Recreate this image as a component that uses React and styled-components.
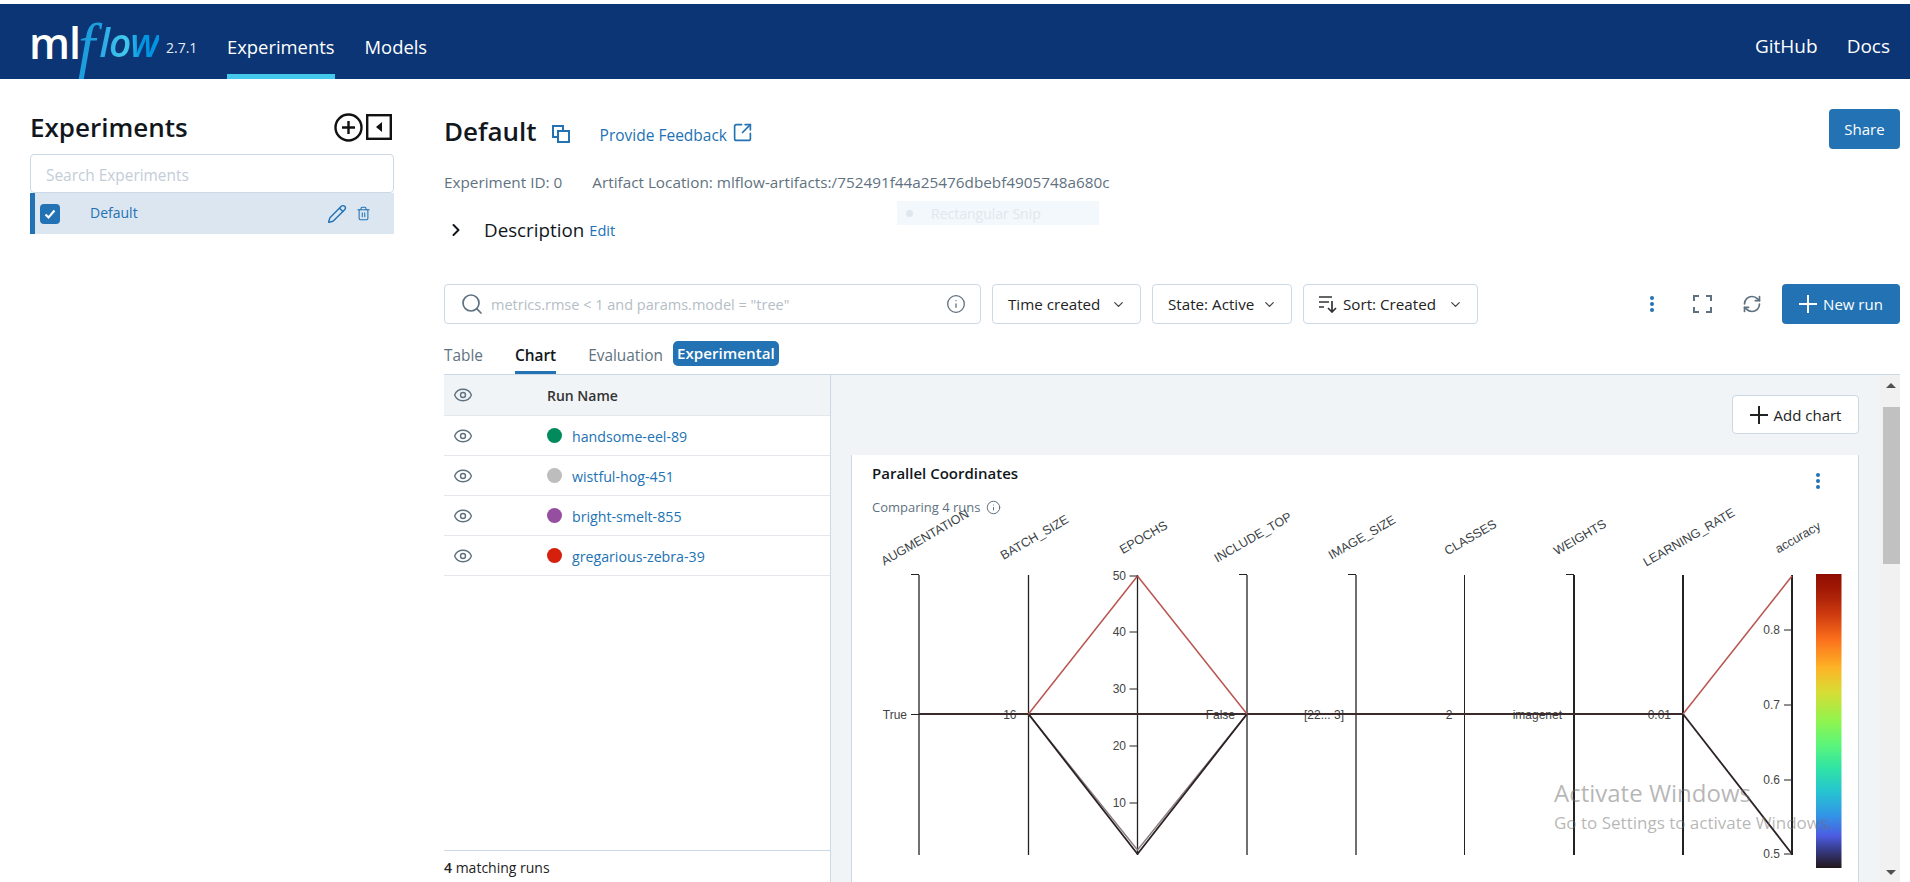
import React from 'react';
import styled, { createGlobalStyle } from 'styled-components';
import { ChevronDown, ChevronRight, Eye, Info, Pencil, RefreshCw, Search, SquareArrowOutUpRight, Trash2 } from 'lucide-react';

const BLUE = '#2272b4';
const GRAY = '#5f7281';
const INK = '#11171c';
const LINE = '#cbd8e5';

const GlobalStyle = createGlobalStyle`
  html, body { margin: 0; padding: 0; background: #fff; }
  body { font-family: "Open Sans", "Noto Sans", sans-serif; color: ${INK}; }
  * { box-sizing: border-box; }
`;

const runs = [
  { name: 'handsome-eel-89', color: '#018a5c' },
  { name: 'wistful-hog-451', color: '#bdbdbd' },
  { name: 'bright-smelt-855', color: '#954ea0' },
  { name: 'gregarious-zebra-39', color: '#d4200c' },
];

const axes = [
  { label: 'AUGMENTATION', x: 67, topTick: true, value: 'True' },
  { label: 'BATCH_SIZE', x: 176.5, value: '16' },
  { label: 'EPOCHS', x: 285.5 },
  { label: 'INCLUDE_TOP', x: 395, topTick: true, value: 'False' },
  { label: 'IMAGE_SIZE', x: 504, topTick: true, value: '[22... 3]', plain: true },
  { label: 'CLASSES', x: 612.5, value: '2', width: 1 },
  { label: 'WEIGHTS', x: 722, topTick: true, value: 'imagenet', width: 2, plain: true },
  { label: 'LEARNING_RATE', x: 831, value: '0.01', width: 2 },
  { label: 'accuracy', x: 940, width: 2 },
];

const epochTicks = [[50, 121], [40, 177], [30, 234], [20, 291], [10, 348]];
const accuracyTicks = [['0.8', 175], ['0.7', 250], ['0.6', 325], ['0.5', 399]];

const colorStops = [
  [0, '#8f0c00'], [0.08, '#ad2208'], [0.14, '#cf3c10'], [0.22, '#fb6e1c'], [0.32, '#fdb426'],
  [0.4, '#d8dc34'], [0.5, '#90f44e'], [0.58, '#5cf57a'], [0.66, '#30e4a4'], [0.74, '#26c4d0'],
  [0.82, '#3296e6'], [0.89, '#4c5ce2'], [0.94, '#363a84'], [1, '#23171b'],
];

const ParallelChart = () => (
  <Chart viewBox="0 0 1006 427" width="1006" height="427">
    <defs>
      <linearGradient id="turbo" x1="0" y1="0" x2="0" y2="1">
        {colorStops.map(([offset, color]) => <stop key={offset} offset={offset} stopColor={color} />)}
      </linearGradient>
    </defs>
    {axes.map((axis) => (
      <g key={axis.label}>
        <line x1={axis.x} x2={axis.x} y1="120" y2="400" stroke="#222" strokeWidth={axis.width || 1.3} />
        {axis.topTick && <path d={`M${axis.x - 8} 119.5 H${axis.x}`} stroke="#222" strokeWidth="1" />}
        <AxisLabel transform={`translate(${axis.x + 8} 86) rotate(-30)`} textAnchor="middle">{axis.label}</AxisLabel>
        {axis.value && (
          <>
            {!axis.plain && <path d={`M${axis.x - 8} 259.5 H${axis.x}`} stroke="#222" strokeWidth="1" />}
            <TickLabel x={axis.x - 12} y="263.5" textAnchor="end">{axis.value}</TickLabel>
          </>
        )}
      </g>
    ))}
    <g fill="none" strokeLinejoin="round">
      <path d="M67 259 L831 259" stroke="#3b2a2b" strokeWidth="2" />
      <path d="M176.5 259 L285.5 395 L395 259" stroke="#8b7f80" strokeWidth="1.4" />
      <path d="M176.5 259 L285.5 399 L395 259" stroke="#2c2224" strokeWidth="1.8" />
      <path d="M176.5 259 L285.5 121 L395 259" stroke="#b9564f" strokeWidth="1.5" />
      <path d="M831 259 L940 399" stroke="#2c2224" strokeWidth="1.8" />
      <path d="M831 259 L940 121" stroke="#b9564f" strokeWidth="1.5" />
    </g>
    {epochTicks.map(([value, y]) => (
      <g key={value}>
        <path d={`M277.5 ${y} H285.5`} stroke="#222" strokeWidth="1" />
        <TickLabel x="274" y={y + 4} textAnchor="end">{value}</TickLabel>
      </g>
    ))}
    {accuracyTicks.map(([value, y]) => (
      <g key={value}>
        <path d={`M932 ${y} H940`} stroke="#222" strokeWidth="1" />
        <TickLabel x="928" y={y + 4} textAnchor="end">{value}</TickLabel>
      </g>
    ))}
    <rect x="964" y="119" width="25.5" height="294" fill="url(#turbo)" />
  </Chart>
);

const CopyIcon = () => (
  <svg width="18" height="18" viewBox="0 0 18 18" fill="none" stroke={BLUE} strokeWidth="2">
    <path d="M11 5V1H1v11h4" />
    <rect x="6" y="6" width="11" height="11" />
  </svg>
);

const MoreIcon = () => (
  <svg width="6" height="18" viewBox="0 0 6 18" fill={BLUE}>
    <circle cx="3" cy="3" r="2" />
    <circle cx="3" cy="9" r="2" />
    <circle cx="3" cy="15" r="2" />
  </svg>
);

const SortIcon = () => (
  <svg width="18" height="18" viewBox="0 0 18 18" fill="none" stroke="#333" strokeWidth="1.7">
    <path d="M0 2h13M0 7h10M0 12h5M13 6v11M9 13l4 4 4-4" />
  </svg>
);

const FullscreenIcon = () => (
  <svg width="19" height="18" viewBox="0 0 19 18" fill="none" stroke={GRAY} strokeWidth="2">
    <path d="M6 1H1v5M13 1h5v5M6 17H1v-5M13 17h5v-5" />
  </svg>
);

const PlusIcon = ({ color }) => (
  <svg width="18" height="18" viewBox="0 0 18 18" fill="none" stroke={color} strokeWidth="2">
    <path d="M9 0v18M0 9h18" />
  </svg>
);

const AddExperimentIcon = () => (
  <svg width="29" height="29" viewBox="0 0 29 29" fill="none" stroke="#111" strokeWidth="2.4">
    <circle cx="14.5" cy="14.5" r="13" />
    <path d="M14.5 8v13M8 14.5h13" />
  </svg>
);

const CollapseIcon = () => (
  <svg width="26" height="26" viewBox="0 0 26 26">
    <rect x="1.2" y="1.2" width="23.6" height="23.6" fill="none" stroke="#111" strokeWidth="2.4" />
    <path d="M16 8v10l-6-5z" fill="#111" />
  </svg>
);

const CheckIcon = () => (
  <svg width="14" height="14" viewBox="0 0 14 14" fill="none" stroke="#fff" strokeWidth="2.2">
    <path d="M2.5 7.5l3 3 6-7" />
  </svg>
);

const App = () => (
  <Page>
    <GlobalStyle />
    <TopBar>
      <Logo>
        <LogoMl>ml</LogoMl>
        <LogoF>f</LogoF>
        <LogoFlow>low</LogoFlow>
      </Logo>
      <Version>2.7.1</Version>
      <NavLinks>
        <NavLink $active>Experiments</NavLink>
        <NavLink>Models</NavLink>
      </NavLinks>
      <NavRight>
        <NavLink>GitHub</NavLink>
        <NavLink>Docs</NavLink>
      </NavRight>
    </TopBar>

    <Content>
      <Sidebar>
        <SidebarHead>
          <SidebarTitle>Experiments</SidebarTitle>
          <SidebarActions>
            <AddExperimentIcon />
            <CollapseIcon />
          </SidebarActions>
        </SidebarHead>
        <SearchBox>Search Experiments</SearchBox>
        <ExperimentRow>
          <Checkbox><CheckIcon /></Checkbox>
          <ExperimentName>Default</ExperimentName>
          <Pencil size={20} color={BLUE} strokeWidth={1.7} />
          <Trash2 size={15} color={BLUE} strokeWidth={1.7} />
        </ExperimentRow>
      </Sidebar>

      <Main>
        <HeaderRow>
          <PageTitle>Default</PageTitle>
          <CopyHolder><CopyIcon /></CopyHolder>
          <Feedback>
            Provide Feedback
            <SquareArrowOutUpRight size={21} color={BLUE} strokeWidth={1.9} />
          </Feedback>
          <PrimaryButton $width={71}>Share</PrimaryButton>
        </HeaderRow>
        <MetaRow>
          <span>Experiment ID: 0</span>
          <span>Artifact Location: mlflow-artifacts:/752491f44a25476dbebf4905748a680c</span>
        </MetaRow>
        <DescriptionRow>
          <ChevronRight size={20} color={INK} strokeWidth={2.4} />
          <DescriptionTitle>Description</DescriptionTitle>
          <EditLink>Edit</EditLink>
        </DescriptionRow>
        <FilterRow>
          <FilterInput>
            <Search size={24} color={GRAY} strokeWidth={1.7} />
            <Placeholder>metrics.rmse &lt; 1 and params.model = "tree"</Placeholder>
            <Info size={20} color={GRAY} strokeWidth={1.6} />
          </FilterInput>
          <Select $width={149}>Time created<ChevronDown size={15} color="#444" strokeWidth={2} /></Select>
          <Select $width={140}>State: Active<ChevronDown size={15} color="#444" strokeWidth={2} /></Select>
          <Select $width={175}><SortIcon />Sort: Created<ChevronDown size={15} color="#444" strokeWidth={2} /></Select>
          <ToolGroup>
            <ToolButton><MoreIcon /></ToolButton>
            <ToolButton><FullscreenIcon /></ToolButton>
            <ToolButton><RefreshCw size={20} color={GRAY} strokeWidth={2} /></ToolButton>
            <PrimaryButton $width={118}><PlusIcon color="#fff" />New run</PrimaryButton>
          </ToolGroup>
        </FilterRow>
        <Tabs>
          <Tab>Table</Tab>
          <Tab $active>Chart</Tab>
          <Tab>Evaluation</Tab>
          <Badge>Experimental</Badge>
        </Tabs>
        <Panel>
          <RunList>
            <RunHeader>
              <EyeCell><Eye size={20} color={GRAY} strokeWidth={1.7} /></EyeCell>
              <RunHeaderName>Run Name</RunHeaderName>
            </RunHeader>
            {runs.map((run) => (
              <RunRow key={run.name}>
                <EyeCell><Eye size={20} color={GRAY} strokeWidth={1.7} /></EyeCell>
                <RunDot $color={run.color} />
                <RunName>{run.name}</RunName>
              </RunRow>
            ))}
            <RunFooter><strong>4</strong> matching runs</RunFooter>
          </RunList>
          <ChartArea>
            <AddChartRow>
              <AddChart><PlusIcon color="#222" />Add chart</AddChart>
            </AddChartRow>
            <Card>
              <CardHead>
                <div>
                  <CardTitle>Parallel Coordinates</CardTitle>
                  <CardSub>Comparing 4 runs <Info size={15} color={GRAY} strokeWidth={1.6} /></CardSub>
                </div>
                <CardMenu><MoreIcon /></CardMenu>
              </CardHead>
              <ParallelChart />
            </Card>
          </ChartArea>
          <ScrollTrack>
            <ArrowUp />
            <ScrollThumb />
            <ArrowDown />
          </ScrollTrack>
        </Panel>
      </Main>
    </Content>

    <SnipHint><SnipDot />Rectangular Snip</SnipHint>
    <Watermark>
      <WatermarkTitle>Activate Windows</WatermarkTitle>
      <WatermarkText>Go to Settings to activate Windows.</WatermarkText>
    </Watermark>
  </Page>
);

export default App;

const Page = styled.div`
  position: relative;
  width: 1910px;
  height: 882px;
  padding-top: 4px;
  overflow: hidden;
  display: flex;
  flex-direction: column;
`;

const TopBar = styled.header`
  height: 75px;
  flex: none;
  background: #0b3574;
  display: flex;
  padding: 0 20px 0 29px;
  color: #fff;
`;

const Logo = styled.div`
  width: 131px;
  height: 75px;
  padding-top: 7px;
  display: flex;
  align-items: center;
  white-space: nowrap;
  color: #fff;
`;

const LogoMl = styled.span`
  font-family: "Open Sans", sans-serif;
  font-size: 43px;
  font-weight: 600;
  letter-spacing: -1px;
  line-height: 1;
  margin-top: -6px;
`;

const LogoF = styled.span`
  font-family: "Liberation Serif", serif;
  font-style: italic;
  font-size: 62px;
  line-height: 1;
  color: #1f9ede;
  margin: 0 4px 0 -2px;
`;

const LogoFlow = styled.span`
  font-family: "Open Sans", sans-serif;
  font-style: italic;
  font-weight: 600;
  font-size: 39px;
  line-height: 1;
  letter-spacing: -1px;
  color: #1590dc;
  margin-top: -7px;
  background: linear-gradient(90deg, #2aa6e6, #43c9ed 45%, #0194e2 70%);
  -webkit-background-clip: text;
  background-clip: text;
  -webkit-text-fill-color: transparent;
`;

const Version = styled.span`
  font-size: 14px;
  line-height: 75px;
  padding-top: 6px;
  margin-left: 6px;
  width: 31px;
  color: #e4ecf4;
`;

const NavLinks = styled.nav`
  display: flex;
  gap: 30px;
  margin-left: 30px;
`;

const NavRight = styled(NavLinks)`
  margin-left: auto;
  gap: 29px;
  a { font-size: 19px; }
`;

const NavLink = styled.a`
  height: 75px;
  padding-top: 14px;
  display: flex;
  align-items: center;
  font-size: 18.4px;
  color: #fff;
  border-bottom: 5px solid ${(p) => (p.$active ? '#43c9ed' : 'transparent')};
`;

const Content = styled.div`
  flex: 1;
  min-height: 0;
  display: flex;
  padding: 30px 10px 0 30px;
`;

const Sidebar = styled.aside`
  width: 364px;
  flex: none;
  padding-top: 3px;
`;

const SidebarHead = styled.div`
  height: 30px;
  margin-bottom: 12px;
  display: flex;
  align-items: center;
  justify-content: space-between;
`;

const SidebarTitle = styled.h2`
  margin: 0;
  font-size: 26px;
  font-weight: 600;
  line-height: 30px;
`;

const SidebarActions = styled.div`
  display: flex;
  align-items: center;
  gap: 3px;
  margin-right: 2px;
`;

const SearchBox = styled.div`
  height: 39px;
  line-height: 41px;
  padding-left: 15px;
  border: 1px solid ${LINE};
  border-radius: 4px;
  font-size: 15.4px;
  color: #c3cdd8;
`;

const ExperimentRow = styled.div`
  height: 41px;
  display: flex;
  align-items: center;
  background: #dbe6f1;
  border-left: 5px solid ${BLUE};
  padding-left: 5px;
  color: ${BLUE};
  svg:last-child { margin: 0 23px 0 9px; }
`;

const Checkbox = styled.span`
  width: 20px;
  height: 20px;
  border-radius: 4px;
  background: ${BLUE};
  display: flex;
  align-items: center;
  justify-content: center;
  svg:last-child { margin: 0; }
`;

const ExperimentName = styled.span`
  font-size: 14px;
  margin: -2px 0 0 30px;
  flex: 1;
`;

const Main = styled.main`
  flex: 1;
  min-width: 0;
  margin-left: 50px;
  display: flex;
  flex-direction: column;
`;

const HeaderRow = styled.div`
  height: 40px;
  flex: none;
  display: flex;
  align-items: center;
`;

const PageTitle = styled.h1`
  margin: 4px 15px 0 0;
  font-size: 26px;
  font-weight: 600;
  line-height: 40px;
`;

const CopyHolder = styled.span`
  display: flex;
  margin-top: 10px;
`;

const Feedback = styled.a`
  margin: 11px 0 0 30px;
  display: flex;
  align-items: center;
  gap: 5px;
  font-size: 15.5px;
  color: ${BLUE};
  svg { margin-top: -4px; }
`;

const PrimaryButton = styled.button`
  width: ${(p) => p.$width}px;
  height: 40px;
  margin-left: auto;
  display: flex;
  align-items: center;
  justify-content: center;
  gap: 6px;
  border: 0;
  border-radius: 4px;
  background: ${BLUE};
  color: #fff;
  font: 15px "Open Sans", sans-serif;
  padding: 0;
`;

const MetaRow = styled.div`
  margin-top: 23px;
  height: 20px;
  flex: none;
  display: flex;
  gap: 30px;
  font-size: 15.3px;
  line-height: 20px;
  color: ${GRAY};
  white-space: nowrap;
`;

const DescriptionRow = styled.div`
  margin-top: 28px;
  height: 20px;
  flex: none;
  display: flex;
  align-items: center;
  padding-left: 2px;
`;

const DescriptionTitle = styled.span`
  margin-left: 18px;
  font-size: 18.8px;
`;

const EditLink = styled.a`
  margin-left: 5px;
  font-size: 14.6px;
  color: ${BLUE};
`;

const FilterRow = styled.div`
  margin-top: 44px;
  height: 40px;
  flex: none;
  display: flex;
  gap: 11px;
`;

const FilterInput = styled.div`
  width: 537px;
  display: flex;
  align-items: center;
  padding: 0 14px 0 15px;
  border: 1px solid ${LINE};
  border-radius: 4px;
`;

const Placeholder = styled.span`
  margin-left: 7px;
  flex: 1;
  font-size: 14.5px;
  color: #b5bdc6;
`;

const Select = styled.div`
  width: ${(p) => p.$width}px;
  display: flex;
  align-items: center;
  gap: 6px;
  padding: 0 14px 0 15px;
  border: 1px solid ${LINE};
  border-radius: 4px;
  font-size: 15.2px;
  white-space: nowrap;
  color: #222;
  svg:last-child { margin-left: auto; }
`;

const ToolGroup = styled.div`
  margin-left: auto;
  display: flex;
  gap: 10px;
`;

const ToolButton = styled.div`
  width: 40px;
  display: flex;
  align-items: center;
  justify-content: center;
`;

const Tabs = styled.div`
  margin-top: 17px;
  height: 33px;
  flex: none;
  display: flex;
  align-items: stretch;
  gap: 32px;
`;

const Tab = styled.span`
  font-size: 15.4px;
  line-height: 28px;
  padding-top: 1px;
  color: ${(p) => (p.$active ? INK : GRAY)};
  font-weight: ${(p) => (p.$active ? 600 : 400)};
  border-bottom: 3px solid ${(p) => (p.$active ? BLUE : 'transparent')};
`;

const Badge = styled.span`
  margin: 0 0 8px -22px;
  padding: 0 4px;
  border-radius: 5px;
  background: ${BLUE};
  color: #fff;
  font-size: 15.2px;
  font-weight: 600;
  line-height: 25px;
`;

const Panel = styled.section`
  flex: 1;
  min-height: 0;
  display: flex;
  border-top: 1px solid ${LINE};
`;

const RunList = styled.div`
  width: 386px;
  flex: none;
  display: flex;
  flex-direction: column;
`;

const RunHeader = styled.div`
  height: 41px;
  flex: none;
  display: flex;
  align-items: center;
  background: #f1f4f7;
  border-bottom: 1px solid #e4e8ec;
`;

const EyeCell = styled.span`
  width: 103px;
  flex: none;
  padding-left: 9px;
  display: flex;
`;

const RunHeaderName = styled.span`
  font-size: 14px;
  font-weight: 600;
  color: #333;
`;

const RunRow = styled.div`
  height: 40px;
  flex: none;
  display: flex;
  align-items: center;
  border-bottom: 1px solid #e4e8ec;
`;

const RunDot = styled.span`
  width: 15px;
  height: 15px;
  margin-right: 10px;
  border-radius: 50%;
  background: ${(p) => p.$color};
`;

const RunName = styled.a`
  font-size: 14.2px;
  padding-top: 2px;
  color: ${BLUE};
`;

const RunFooter = styled.div`
  margin-top: auto;
  height: 32px;
  flex: none;
  border-top: 1px solid ${LINE};
  font-size: 14px;
  line-height: 34px;
  color: #222;
  strong { font-weight: 600; }
`;

const ChartArea = styled.div`
  flex: 1;
  min-width: 0;
  padding: 20px 21px 0 21px;
  background: #f1f4f7;
  border-left: 1px solid ${LINE};
`;

const AddChartRow = styled.div`
  display: flex;
  justify-content: flex-end;
  margin-bottom: 21px;
`;

const AddChart = styled.div`
  width: 127px;
  height: 39px;
  display: flex;
  align-items: center;
  justify-content: center;
  gap: 6px;
  border: 1px solid ${LINE};
  border-radius: 4px;
  background: #fff;
  font-size: 15px;
  color: #222;
`;

const Card = styled.div`
  background: #fff;
  width: 1006px;
  height: 460px;
  box-shadow: -1px 0 0 ${LINE}, 1px 0 0 ${LINE};
`;

const CardHead = styled.div`
  height: 61px;
  padding: 9px 37px 0 20px;
  display: flex;
  justify-content: space-between;
`;

const CardTitle = styled.div`
  font-size: 15px;
  font-weight: 600;
  line-height: 18px;
`;

const CardSub = styled.div`
  margin-top: 16px;
  display: flex;
  align-items: center;
  gap: 5px;
  font-size: 13px;
  line-height: 18px;
  color: ${GRAY};
`;

const CardMenu = styled.div`
  padding-top: 8px;
`;

const Chart = styled.svg`
  display: block;
  margin-top: -61px;
  font-family: "Liberation Sans", Arial, sans-serif;
`;

const AxisLabel = styled.text`
  font-size: 12.5px;
  fill: #3a3f46;
`;

const TickLabel = styled.text`
  font-size: 12px;
  fill: #444;
`;

const ScrollTrack = styled.div`
  width: 20px;
  flex: none;
  background: #f1f1f1;
  display: flex;
  flex-direction: column;
  align-items: center;
  padding: 8px 0 7px 2px;
`;

const ArrowUp = styled.span`
  border: 5px solid transparent;
  border-top: 0;
  border-bottom: 5px solid #505050;
`;

const ArrowDown = styled.span`
  margin-top: auto;
  border: 5px solid transparent;
  border-bottom: 0;
  border-top: 5px solid #505050;
`;

const ScrollThumb = styled.span`
  width: 17px;
  height: 157px;
  margin-top: 19px;
  background: #c1c1c1;
`;

const SnipHint = styled.div`
  position: absolute;
  left: 897px;
  top: 201px;
  width: 202px;
  height: 24px;
  display: flex;
  align-items: center;
  padding-left: 9px;
  background: #f3f8fc;
  font-size: 14px;
  color: #e1e7ee;
`;

const SnipDot = styled.span`
  width: 7px;
  height: 7px;
  margin-right: 18px;
  border-radius: 50%;
  background: #dfe7ef;
`;

const Watermark = styled.div`
  position: absolute;
  left: 1554px;
  top: 775px;
  z-index: 1;
  color: rgba(110, 110, 110, 0.5);
  white-space: nowrap;
`;

const WatermarkTitle = styled.div`
  font-size: 24px;
  line-height: 36px;
`;

const WatermarkText = styled.div`
  font-size: 17px;
  line-height: 24px;
`;
